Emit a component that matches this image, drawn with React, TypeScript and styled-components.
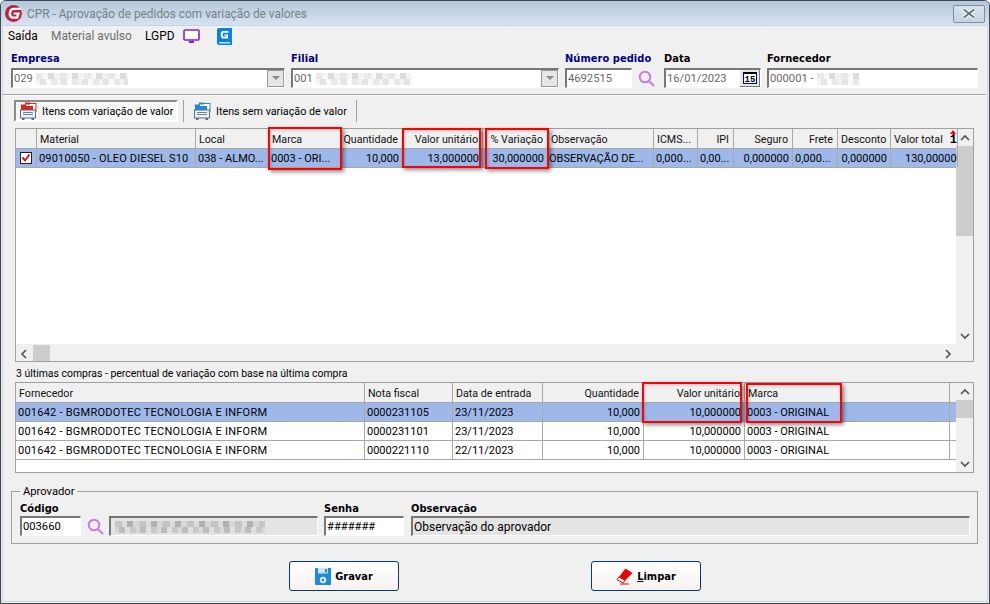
import React from "react";
import styled, { createGlobalStyle } from "styled-components";

const FONT = `Roboto, "Liberation Sans", Arial, sans-serif`;
const BOLD = `"DejaVu Sans Condensed", "DejaVu Sans", "Liberation Sans", sans-serif`;

const Global = createGlobalStyle`
  html, body { margin: 0; padding: 0; background: #f0f0f0; overflow: hidden; }
  * { box-sizing: border-box; }
  svg { flex: none; }
  body { font-family: ${FONT}; font-size: 11px; color: #000; }
`;

const Win = styled.div`
  width: 990px; height: 604px; display: flex; flex-direction: column;
  background: #f0f0f0; border: 1px solid #3c4753; border-radius: 6px 6px 0 0; overflow: hidden;
`;
const TitleBar = styled.div`
  height: 25px; flex: none; display: flex; align-items: center; padding: 0 4px 0 4px; gap: 3px;
  background: linear-gradient(#b6c7da, #d7e4f2);
  font: 11.85px Roboto, sans-serif; color: #76808c;
`;
const TitleText = styled.span` flex: 1; `;
const CloseBtn = styled.div`
  width: 32px; height: 18px; border: 1px solid #7f8fa1; border-radius: 2px;
  display: flex; align-items: center; justify-content: center;
  background: linear-gradient(#d7e2ed, #c6d4e2);
`;
const Client = styled.div`
  flex: 1; display: flex; flex-direction: column; min-height: 0;
  margin: 0 2px 2px; background: #f0f0f0; box-shadow: 0 0 0 1px #c6d4e3;
`;
const MenuBar = styled.div`
  height: 20px; flex: none; display: flex; align-items: center; padding-left: 5px; font: 11.9px Roboto, sans-serif;
`;
const MenuItem = styled.span<{ $w: number; $muted?: boolean }>`
  width: ${p => p.$w}px; flex: none; display: flex; align-items: center; color: ${p => (p.$muted ? "#6d6d6d" : "#000")};
`;
const FilterRow = styled.div`
  display: flex; padding: 6px 0 0 8px; height: 48px; flex: none; align-items: flex-start;
`;
const Field = styled.div<{ $w: number; $mr?: number }>`
  width: ${p => p.$w}px; margin-right: ${p => p.$mr ?? 6}px; flex: none; display: flex; flex-direction: column;
`;
const Label = styled.div<{ $navy?: boolean }>`
  font: bold 11px ${BOLD}; height: 16px; line-height: 14px; white-space: nowrap; letter-spacing: 0.05px;
  color: ${p => (p.$navy ? "#000080" : "#000")};
`;
const Input = styled.div<{ $grey?: boolean; $dark?: boolean; $fs?: number }>`
  height: 20px; display: flex; align-items: center; overflow: hidden; position: relative;
  background: ${p => (p.$grey ? "#e4e4e4" : "#fff")};
  color: ${p => (p.$dark ? "#000" : "#6a6a6a")};
  border-style: solid; border-width: 2px 1px 1px 2px;
  border-color: #777 #fff #fff #777; padding-left: 1px; font-size: ${p => p.$fs ?? 11.2}px; white-space: nowrap;
`;
const Redacted = styled.span<{ $w: number; $dark?: boolean }>`
  display: inline-block; height: 12px; width: ${p => p.$w}px; margin-left: 3px; opacity: ${p => (p.$dark ? 1 : 0.85)};
  background:
    repeating-linear-gradient(90deg, ${p => (p.$dark ? "#c4c4c4" : "#e6e6e6")} 0 7px, ${p => (p.$dark ? "#dcdcdc" : "#f6f6f6")} 7px 12px, ${p => (p.$dark ? "#b0b0b0" : "#d8d8d8")} 12px 18px, ${p => (p.$dark ? "#d6d6d6" : "#f0f0f0")} 18px 24px) 0 0 / 100% 50% no-repeat,
    repeating-linear-gradient(90deg, ${p => (p.$dark ? "#d8d8d8" : "#f2f2f2")} 0 4px, ${p => (p.$dark ? "#bcbcbc" : "#e0e0e0")} 4px 10px, ${p => (p.$dark ? "#e0e0e0" : "#fafafa")} 10px 15px, ${p => (p.$dark ? "#c8c8c8" : "#e4e4e4")} 15px 21px) 0 100% / 100% 50% no-repeat;
`;
const ComboBtn = styled.div`
  position: absolute; right: 0; top: 0; bottom: 0; width: 17px; background: #e6e6e6;
  border: 1px solid #999; display: flex; align-items: center; justify-content: center;
`;
const CalBtn = styled.div`
  position: absolute; right: 0; top: 0; bottom: 0; width: 20px; background: #e8e8e8;
  border-right: 1px solid #777; border-bottom: 1px solid #777; display: flex; align-items: center; justify-content: center;
`;
const SearchSlot = styled.div<{ $w: number }>`
  width: ${p => p.$w}px; flex: none; height: 36px; display: flex; align-items: flex-end; padding: 0 0 1px 6px;
`;
const Rule = styled.div`
  height: 2px; flex: none; margin: 0 1px 0 0; border-top: 1px solid #a4a4a4; border-bottom: 1px solid #fafafa;
`;
const Tabs = styled.div`
  height: 32px; flex: none; display: flex; align-items: flex-start; padding: 4px 0 0 11px;
`;
const Tab = styled.div<{ $w: number; $active?: boolean }>`
  width: ${p => p.$w}px; height: 22px; flex: none; display: flex; align-items: center; gap: 5px;
  padding-left: ${p => (p.$active ? 4 : 5)}px;
  white-space: nowrap; font-size: 10.75px;
  ${p => p.$active
    ? `border: 2px solid #8a8a8a; border-right-color:#fff; border-bottom-color:#fff; background: repeating-conic-gradient(#fff 0 25%, #f0f0f0 0 50%) 0 0/2px 2px;`
    : ""}
`;
const TabSep = styled.div<{ $ml: number }>`
  width: 1px; height: 22px; background: #a0a0a0; margin: 0 ${p => p.$ml}px; flex: none;
`;
const GridBox = styled.div<{ $h: number }>`
  position: relative; height: ${p => p.$h}px; margin: 0 13px 0 12px; flex: none;
  border: 1px solid #a0a0a0; background: #fff; display: flex; overflow: visible;
`;
const GridMain = styled.div`
  flex: 1; min-width: 0; display: flex; flex-direction: column;
`;
const Row = styled.div<{ $h?: number; $sel?: boolean; $head?: boolean }>`
  display: flex; flex: none; height: ${p => p.$h ?? 19}px;
  background: ${p => (p.$head ? "#f0f0f0" : p.$sel ? "#9db8e9" : "#fff")};
  border-bottom: 1px solid #a8a8a8;
`;
const Cell = styled.div<{ $w: number; $right?: boolean; $pl?: number; $center?: boolean; $ls?: number }>`
  width: ${p => p.$w}px; flex: none; border-right: 1px solid #a8a8a8; padding: 0 3px 0 ${p => p.$pl ?? 2}px; font-size: 11px;
  letter-spacing: ${p => p.$ls ?? 0}px;
  display: flex; align-items: center; overflow: hidden; white-space: nowrap;
  justify-content: ${p => (p.$center ? "center" : p.$right ? "flex-end" : "flex-start")}; position: relative;
`;
const HeadCell = styled(Cell)`
  padding: 2px 4px 0 3px; color: #111; font-size: 10.7px;
`;
const Spacer = styled.div` flex: 1; background: #fff; `;
const HBar = styled.div`
  height: 17px; flex: none; background: #f0f0f0; display: flex; align-items: center; position: relative;
`;
const ArrowSlot = styled.div`
  width: 17px; height: 17px; flex: none; display: flex; align-items: center; justify-content: center;
`;
const HThumb = styled.div` width: 17px; height: 16px; background: #cdcdcd; flex: none; `;
const VBar = styled.div`
  width: 17px; flex: none; background: #f0f0f0; display: flex; flex-direction: column;
`;
const VThumb = styled.div<{ $h: number }>` height: ${p => p.$h}px; background: #cdcdcd; flex: none; `;
const Fill = styled.div` flex: 1; `;
const Highlight = styled.div<{ $x: number; $y: number; $w: number; $h: number }>`
  position: absolute; left: ${p => p.$x}px; top: ${p => p.$y}px; width: ${p => p.$w}px; height: ${p => p.$h}px;
  border: 2px solid #f00; box-shadow: 2px 2px 4px rgba(0,0,0,.45), inset 1px 1px 3px rgba(0,0,0,.2); pointer-events: none;
`;
const Caption = styled.div`
  height: 20px; flex: none; padding: 5px 0 0 13px; font-size: 10.45px; line-height: 14px; white-space: nowrap;
`;
const Group = styled.fieldset`
  margin: 12px 9px 0 8px; padding: 2px 0 6px 8px; height: 59px; flex: none; border: 1px solid #a0a0a0; display: flex; align-items: flex-start; min-width: 0;
  ${Label} { line-height: 18px; }
`;
const Legend = styled.legend` padding: 0 3px; margin-left: 0; font-size: 11.2px; line-height: 13px; `;
const Buttons = styled.div`
  flex: 1; display: flex; justify-content: flex-start; padding: 17px 0 0 286px; gap: 192px;
`;
const Btn = styled.div`
  width: 110px; height: 30px; border: 1px solid #003c74; border-radius: 3px; display: flex; align-items: center;
  justify-content: center; gap: 4px; font: bold 11px ${BOLD}; background: linear-gradient(#ffffff, #f6f2ee);
`;
const Under = styled.span` text-decoration: underline; `;
const SortMark = styled.div`
  position: absolute; right: 0px; top: 1px; display: flex; flex-direction: column; align-items: center; font: bold 12px "Liberation Mono", monospace; line-height: 11px; color: #000;
`;
const SortTri = styled.div`
  width: 0; height: 0; border: 3.5px solid transparent; border-top: 0; border-bottom: 4px solid #f00; margin-bottom: 1px;
`;

const Logo = () => (
  <svg width="19" height="19" viewBox="0 0 18 18">
    <circle cx="8" cy="9" r="8" fill="#c0213a" />
    <path d="M15.5 3.5H8C5 3.5 3.4 6.5 3.4 9.2s1.5 4.8 4.4 4.8h4.6l1.8-6H8.4L7.8 10h3.2l-.5 1.8H8C6.3 11.8 5.8 10.5 5.8 9.2s.9-3.4 2.4-3.4h6.4z" fill="#fff" />
  </svg>
);
const Cross = () => (
  <svg width="14" height="11" viewBox="0 0 14 11">
    <path d="M2 1.5 L12 9.5 M12 1.5 L2 9.5" stroke="#fff" strokeWidth="4" />
    <path d="M2 1.5 L12 9.5 M12 1.5 L2 9.5" stroke="#67737f" strokeWidth="2" />
  </svg>
);
const Monitor = () => (
  <svg width="17" height="14" viewBox="0 0 17 14">
    <rect x="1" y="1" width="15" height="10" rx="1" fill="#fff" stroke="#8a1be0" strokeWidth="1.6" />
    <rect x="6" y="12" width="5" height="2" fill="#8a1be0" />
  </svg>
);
const BookG = () => (
  <svg width="15" height="17" viewBox="0 0 15 17">
    <path d="M0 2a2 2 0 0 1 2-2h13v17H2a2 2 0 0 1-2-2z" fill="#0a84e0" />
    <path d="M2 14h11v1.4H2z" fill="#bfe0fa" />
    <path d="M11.5 3H6C4.5 3 3.7 4.5 3.7 6.5S4.5 10.5 6 10.5h5V6.5H7.5v1.7h1.8v.6H6.5C6 8.8 5.7 7.8 5.7 6.5S6 4.7 6.5 4.7h5z" fill="#fff" />
  </svg>
);
const Arrow = ({ dir }: { dir: "up" | "down" | "left" | "right" }) => {
  const d = { up: "M1 6 L5 2 L9 6", down: "M1 2 L5 6 L9 2", left: "M6 1 L2 5 L6 9", right: "M3 1 L7 5 L3 9" }[dir];
  return (
    <svg width="10" height="10" viewBox="0 0 10 8" overflow="visible">
      <path d={d} fill="none" stroke="#505050" strokeWidth="1.6" />
    </svg>
  );
};
const ComboArrow = () => (
  <svg width="8" height="5" viewBox="0 0 8 5"><path d="M0 0h8L4 4z" fill="#8a8a8a" /></svg>
);
const Lens = () => (
  <svg width="17" height="17" viewBox="0 0 17 17">
    <circle cx="7" cy="7" r="5.3" fill="none" stroke="#c47ee8" strokeWidth="2" />
    <path d="M11 11 L16 16" stroke="#c47ee8" strokeWidth="2.2" />
  </svg>
);
const Cal = () => (
  <svg width="14" height="12" viewBox="0 0 14 12">
    <rect x="0.5" y="0.5" width="13" height="11" fill="#fff" stroke="#000080" />
    <path d="M0 0h14v2H0z" fill="#000" />
    <text x="7" y="10.4" textAnchor="middle" fontSize="9" fontWeight="bold" fontFamily="Liberation Mono, monospace">15</text>
  </svg>
);
const Folders = ({ color }: { color: string }) => (
  <svg width="17" height="19" viewBox="0 0 17 19">
    <rect x="5.5" y="1.5" width="10.5" height="8" fill="#fff" stroke={color} />
    <path d="M5 0.5h5v2H5z" fill={color} />
    <rect x="1" y="4" width="12" height="6" fill={color} />
    <path d="M1 4h5v-1.5h-5z" fill={color} />
    <rect x="0.5" y="8" width="15" height="8" fill="#eef2f6" stroke="#5f6f7f" />
    <path d="M3 10.5h10M3 12.5h10" stroke="#6d8196" />
    <rect x="2" y="16" width="2.5" height="2" fill="#5f6f7f" />
    <rect x="11.5" y="16" width="2.5" height="2" fill="#5f6f7f" />
  </svg>
);
const Check = () => (
  <svg width="12" height="12" viewBox="0 0 12 12">
    <rect x="0.5" y="0.5" width="11" height="11" fill="#fff" stroke="#222" />
    <path d="M2.5 5.5 L5 8.5 L9.5 2.5" fill="none" stroke="#e0101a" strokeWidth="2" />
  </svg>
);
const Disk = () => (
  <svg width="16" height="17" viewBox="0 0 16 17">
    <path d="M0 1a1 1 0 0 1 1-1h15v17H1a1 1 0 0 1-1-1z" fill="#1e88e5" />
    <rect x="3" y="0" width="10" height="5.5" fill="#cfe6fa" />
    <rect x="10" y="1" width="2" height="3.5" fill="#1e88e5" />
    <circle cx="8" cy="12" r="3.2" fill="#e8f3fc" />
    <circle cx="8" cy="12" r="1.4" fill="#1e88e5" />
  </svg>
);
const Eraser = () => (
  <svg width="17" height="17" viewBox="0 0 17 17">
    <path d="M9.5 0.5 L16.5 5 L9 12.5 L3 9z" fill="#e90000" />
    <path d="M3 9 L9 12.5 L7 15 L1 11.5z" fill="#fff" stroke="#e90000" />
    <path d="M4 16h9" stroke="#e90000" />
  </svg>
);

const topCols = [21, 159, 73, 73, 61, 80, 65, 106, 44, 36, 59, 45, 53, 67];
const topHead: [string, boolean?][] = [
  [""], ["Material"], ["Local"], ["Marca"], ["Quantidade", true], ["Valor unitário", true], ["% Variação", true],
  ["Observação"], ["ICMS..."], ["IPI", true], ["Seguro", true], ["Frete", true], ["Desconto"], ["Valor total"],
];
const topRow: [string, boolean?, number?, number?][] = [
  ["09010050 - OLEO DIESEL S10", false, 2, 0.18], ["038 - ALMO..."], ["0003 - ORI..."], ["10,000", true], ["13,000000", true],
  ["30,000000", true], ["OBSERVAÇÃO  DE...", false, 1], ["0,000..."], ["0,00..."], ["0,000000", true], ["0,000..."], ["0,000000", true], ["130,000000", false, 14],
];
const botCols = [349, 88, 90, 101, 101, 205];
const botHead: [string, boolean?][] = [
  ["Fornecedor"], ["Nota fiscal"], ["Data de entrada"], ["Quantidade", true], ["Valor unitário", true], ["Marca"],
];
const botRows: [string, string, string][] = [
  ["0000231105", "23/11/2023", "sel"],
  ["0000231101", "23/11/2023", ""],
  ["0000221110", "22/11/2023", ""],
];

export default function App() {
  return (
    <>
      <Global />
      <Win>
        <TitleBar>
          <Logo />
          <TitleText>CPR - Aprovação de pedidos com variação de valores</TitleText>
          <CloseBtn><Cross /></CloseBtn>
        </TitleBar>
        <Client>
          <MenuBar>
            <MenuItem $w={43}>Saída</MenuItem>
            <MenuItem $w={94} $muted>Material avulso</MenuItem>
            <MenuItem $w={38}>LGPD</MenuItem>
            <MenuItem $w={34}><Monitor /></MenuItem>
            <MenuItem $w={20}><BookG /></MenuItem>
          </MenuBar>
          <FilterRow>
            <Field $w={274}>
              <Label $navy>Empresa</Label>
              <Input>029<Redacted $w={92} /><ComboBtn><ComboArrow /></ComboBtn></Input>
            </Field>
            <Field $w={268}>
              <Label $navy>Filial</Label>
              <Input>001<Redacted $w={95} /><ComboBtn><ComboArrow /></ComboBtn></Input>
            </Field>
            <Field $w={67} $mr={0}>
              <Label $navy>Número pedido</Label>
              <Input>4692515</Input>
            </Field>
            <SearchSlot $w={32}><Lens /></SearchSlot>
            <Field $w={97}>
              <Label>Data</Label>
              <Input>16/01/2023<CalBtn><Cal /></CalBtn></Input>
            </Field>
            <Field $w={211} $mr={0}>
              <Label>Fornecedor</Label>
              <Input>000001 -<Redacted $w={42} /></Input>
            </Field>
          </FilterRow>
          <Rule />
          <Tabs>
            <Tab $w={164} $active><Folders color="#e02020" />Itens com variação de valor</Tab>
            <TabSep $ml={5} />
            <Tab $w={167}><Folders color="#1e88e5" />Itens sem variação de valor</Tab>
            <TabSep $ml={0} />
          </Tabs>
          <GridBox $h={234}>
            <GridMain>
              <Row $head $h={20}>
                {topHead.map(([t, r], i) => (
                  <HeadCell key={i} $w={topCols[i]} $right={r}>
                    {t}
                    {t === "Valor total" && <SortMark><SortTri />1</SortMark>}
                  </HeadCell>
                ))}
              </Row>
              <Row $sel>
                <Cell $w={topCols[0]} $center><Check /></Cell>
                {topRow.map(([t, r, pl, ls], i) => (
                  <Cell key={i} $w={topCols[i + 1]} $right={r} $pl={pl} $ls={ls}>{t}</Cell>
                ))}
              </Row>
              <Spacer />
              <HBar>
                <ArrowSlot><Arrow dir="left" /></ArrowSlot>
                <HThumb />
                <Fill />
                <ArrowSlot><Arrow dir="right" /></ArrowSlot>
              </HBar>
            </GridMain>
            <VBar>
              <ArrowSlot><Arrow dir="up" /></ArrowSlot>
              <VThumb $h={90} />
              <Fill />
              <ArrowSlot><Arrow dir="down" /></ArrowSlot>
              <ArrowSlot />
            </VBar>
            <Highlight $x={252} $y={-2} $w={74} $h={43} />
            <Highlight $x={386} $y={-1} $w={79} $h={40} />
            <Highlight $x={469} $y={-1} $w={64} $h={41} />
          </GridBox>
          <Caption>3 últimas compras - percentual de variação com base na última compra</Caption>
          <GridBox $h={91}>
            <GridMain>
              <Row $head $h={20}>
                {botHead.map(([t, r], i) => (
                  <HeadCell key={i} $w={botCols[i]} $right={r}>{t}</HeadCell>
                ))}
              </Row>
              {botRows.map(([nf, d, s], i) => (
                <Row key={i} $sel={s === "sel"}>
                  <Cell $w={botCols[0]} $ls={0.24}>001642 - BGMRODOTEC TECNOLOGIA E INFORM</Cell>
                  <Cell $w={botCols[1]}>{nf}</Cell>
                  <Cell $w={botCols[2]}>{d}</Cell>
                  <Cell $w={botCols[3]} $right>10,000</Cell>
                  <Cell $w={botCols[4]} $right>10,000000</Cell>
                  <Cell $w={botCols[5]}>0003 - ORIGINAL</Cell>
                </Row>
              ))}
            </GridMain>
            <VBar>
              <ArrowSlot><Arrow dir="up" /></ArrowSlot>
              <VThumb $h={18} />
              <Fill />
              <ArrowSlot><Arrow dir="down" /></ArrowSlot>
            </VBar>
            <Highlight $x={626} $y={-1} $w={100} $h={41} />
            <Highlight $x={730} $y={0} $w={96} $h={40} />
          </GridBox>
          <Group>
            <Legend>Aprovador</Legend>
            <Field $w={61} $mr={0}>
              <Label>Código</Label>
              <Input $dark>003660</Input>
            </Field>
            <SearchSlot $w={28}><Lens /></SearchSlot>
            <Field $w={209} $mr={6}>
              <Label>&nbsp;</Label>
              <Input $grey><Redacted $w={150} $dark /></Input>
            </Field>
            <Field $w={80} $mr={7}>
              <Label>Senha</Label>
              <Input $dark>#######</Input>
            </Field>
            <Field $w={559} $mr={0}>
              <Label>Observação</Label>
              <Input $grey $dark $fs={12}>Observação do aprovador</Input>
            </Field>
          </Group>
          <Buttons>
            <Btn><Disk />Gravar</Btn>
            <Btn><Eraser /><span><Under>L</Under>impar</span></Btn>
          </Buttons>
        </Client>
      </Win>
    </>
  );
}
